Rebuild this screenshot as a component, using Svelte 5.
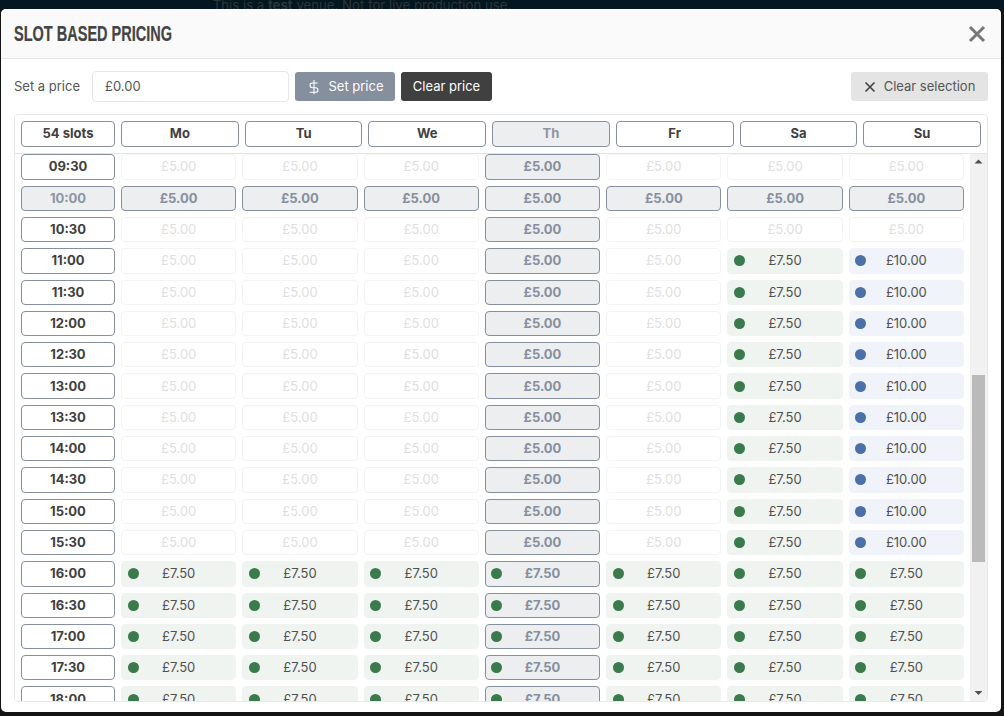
<script>
  import { onMount } from 'svelte';

  const days = ['Mo', 'Tu', 'We', 'Th', 'Fr', 'Sa', 'Su'];
  const selectedDay = 3;
  const selectedSlot = 20;
  const rowPitch = 31.3;
  const arrowSize = 17;

  // half hour slots over the whole day
  const slots = Array.from({ length: 48 }, (_, i) => {
    const h = String(Math.floor(i / 2)).padStart(2, '0');
    return `${h}:${i % 2 ? '30' : '00'}`;
  });

  function priceFor(slot, day) {
    if (slot >= 32) return { label: '£7.50', tone: 'green' };
    if (slot >= 22 && day === 5) return { label: '£7.50', tone: 'green' };
    if (slot >= 22 && day === 6) return { label: '£10.00', tone: 'blue' };
    return { label: '£5.00', tone: 'none' };
  }

  let body;
  let thumbTop = 0;
  let thumbHeight = 0;

  function syncThumb() {
    const track = body.clientHeight - arrowSize * 2;
    thumbHeight = (track * body.clientHeight) / body.scrollHeight;
    thumbTop = arrowSize + (track * body.scrollTop) / body.scrollHeight;
  }

  onMount(() => {
    body.scrollTop = 19 * rowPitch - 0.4;
    syncThumb();
  });
</script>

<div class="page">
  <div class="banner"><span>This is a <b>test</b> venue. Not for live production use.</span></div>

  <div class="modal">
    <header class="modal-header">
      <h2>SLOT BASED PRICING</h2>
      <button class="close" aria-label="Close">
        <svg viewBox="0 0 18 18" width="18" height="18">
          <path d="M2 2 L16 16 M16 2 L2 16" stroke="#777" stroke-width="3" fill="none" />
        </svg>
      </button>
    </header>

    <div class="toolbar">
      <label for="price">Set a price</label>
      <input id="price" type="text" value="£0.00" />
      <button class="btn btn-set">
        <svg viewBox="0 0 24 24" width="16" height="16" fill="none" stroke="#fff" stroke-width="1.6" stroke-linecap="round">
          <path d="M12 2v20M17 6H9.5a3.5 3.5 0 0 0 0 7h5a3.5 3.5 0 0 1 0 7H6" />
        </svg>
        Set price
      </button>
      <button class="btn btn-clear">Clear price</button>
      <button class="btn btn-selection">
        <svg viewBox="0 0 12 12" width="12" height="12">
          <path d="M1.5 1.5 L10.5 10.5 M10.5 1.5 L1.5 10.5" stroke="#444" stroke-width="1.7" fill="none" />
        </svg>
        Clear selection
      </button>
    </div>

    <div class="table">
      <div class="head">
        <div class="label">54 slots</div>
        {#each days as day, d}
          <div class="label day" class:active={d === selectedDay}>{day}</div>
        {/each}
      </div>

      <div class="body-wrap">
        <div class="body" bind:this={body} on:scroll={syncThumb}>
          <div class="rows">
            {#each slots as slot, s}
              <div class="label time" class:active={s === selectedSlot}>{slot}</div>
              {#each days as _, d}
                {@const price = priceFor(s, d)}
                <div
                  class="cell {price.tone}"
                  class:selected={s === selectedSlot || d === selectedDay}
                >
                  {#if price.tone !== 'none'}<span class="dot"></span>{/if}
                  {price.label}
                </div>
              {/each}
            {/each}
          </div>
        </div>

        <div class="scrollbar">
          <svg class="arrow" viewBox="0 0 17 17" width="17" height="17">
            <path d="M4.5 9.5 L8.5 5.5 L12.5 9.5 Z" fill="#505050" />
          </svg>
          <div class="thumb" style="top: {thumbTop}px; height: {thumbHeight}px"></div>
          <svg class="arrow" viewBox="0 0 17 17" width="17" height="17">
            <path d="M4.5 7 L8.5 11 L12.5 7 Z" fill="#505050" />
          </svg>
        </div>
      </div>
    </div>
  </div>
</div>

<style>
  :global(body) {
    margin: 0;
    background: #141414;
    font-family: Inter, "Liberation Sans", sans-serif;
    overflow: hidden;
  }

  .page {
    height: 716px;
    padding: 0 3px 0 1px;
    box-sizing: border-box;
  }

  .banner {
    height: 9px;
    margin: 0 -3px 0 -1px;
    background: #04161f;
    overflow: hidden;
    text-align: center;
    font-size: 13.2px;
    line-height: 10px;
    color: #2c363b;
    padding-right: 280px;
  }

  .modal {
    height: 703px;
    background: #fff;
    border-radius: 5px;
    overflow: hidden;
    display: flex;
    flex-direction: column;
  }

  .modal-header {
    height: 50px;
    flex: none;
    box-sizing: border-box;
    display: flex;
    align-items: center;
    justify-content: space-between;
    padding: 0 15px 0 13px;
    background: #fafafa;
    border-bottom: 1px solid #e5e5e5;
  }

  h2 {
    margin: 0;
    font-family: "Liberation Sans", sans-serif;
    font-size: 22px;
    font-weight: 700;
    color: #444;
    white-space: nowrap;
    -webkit-text-stroke: 0.2px #444;
    transform: scaleX(0.66);
    transform-origin: left center;
  }

  .close {
    display: flex;
    padding: 0;
    background: none;
    border: 0;
  }

  .toolbar {
    height: 55px;
    flex: none;
    box-sizing: border-box;
    display: flex;
    align-items: center;
    gap: 6px;
    padding: 0 13px;
    font-size: 13px;
    color: #555;
  }

  .toolbar label {
    width: 72px;
    padding-bottom: 2px;
  }

  input {
    width: 197px;
    height: 31px;
    box-sizing: border-box;
    padding: 0 12px 2px;
    border: 1px solid #e6e6e6;
    border-radius: 4px;
    font: inherit;
    font-size: 13px;
    color: #555;
    outline: none;
  }

  .btn {
    height: 29px;
    box-sizing: border-box;
    display: flex;
    align-items: center;
    justify-content: center;
    gap: 6px;
    padding: 0 0 2px;
    border: 0;
    border-radius: 3px;
    font: inherit;
    font-size: 13px;
  }

  .btn svg {
    margin-top: 2px;
  }

  .btn-set {
    width: 100px;
    background: #868f9d;
    color: #fff;
  }

  .btn-clear {
    width: 91px;
    background: #404040;
    color: #fff;
  }

  .btn-selection {
    width: 137px;
    margin-left: auto;
    background: #e4e4e4;
    color: #555;
    gap: 8px;
  }

  .table {
    flex: 1;
    min-height: 0;
    margin: 0 13px 10px;
    border: 1px solid #e8e8e8;
    border-radius: 4px;
    display: flex;
    flex-direction: column;
    overflow: hidden;
  }

  .head {
    flex: none;
    display: grid;
    grid-template-columns: 94px repeat(7, 1fr);
    gap: 6px;
    padding: 6px;
    border-bottom: 1px solid #e5e5e5;
  }

  .head .label {
    padding-bottom: 2px;
  }

  .body-wrap {
    flex: 1;
    min-height: 0;
    display: flex;
  }

  .body {
    flex: 1;
    min-width: 0;
    overflow-y: scroll;
    scrollbar-width: none;
  }

  .scrollbar {
    position: relative;
    flex: none;
    width: 17px;
    display: flex;
    flex-direction: column;
    justify-content: space-between;
    background: #f1f1f1;
  }

  .arrow {
    display: block;
  }

  .thumb {
    position: absolute;
    left: 2px;
    right: 2px;
    background: #bababa;
  }

  .rows {
    display: grid;
    grid-template-columns: 94px repeat(7, 1fr);
    grid-auto-rows: 25.3px;
    gap: 6px;
    margin-top: -0.3px;
    padding: 0 6px;
  }

  .label {
    height: 26px;
    box-sizing: border-box;
    display: flex;
    align-items: center;
    justify-content: center;
    border: 1px solid #868f9d;
    border-radius: 4px;
    background: #fff;
    font-size: 13px;
    font-weight: 700;
    color: #404040;
  }

  .time {
    height: 100%;
    padding-bottom: 1px;
  }

  .label.active {
    background: #eceef0;
    color: #8c95a3;
  }

  .cell {
    position: relative;
    display: flex;
    align-items: center;
    justify-content: center;
    box-sizing: border-box;
    padding-bottom: 1px;
    border: 1px solid #f4f4f4;
    border-radius: 4px;
    font-size: 13px;
    color: #e0e0e0;
  }

  .cell.green {
    background: #f0f4f1;
    border-color: #f0f4f1;
    color: #505050;
  }

  .cell.blue {
    background: #f0f4fa;
    border-color: #f0f4fa;
    color: #505050;
  }

  .cell.selected {
    background: #eceef0;
    border-color: #868f9d;
    color: #868f9d;
    font-weight: 700;
  }

  .dot {
    position: absolute;
    left: 5.5px;
    top: 50%;
    width: 11px;
    height: 11px;
    margin-top: -5.5px;
    border-radius: 50%;
  }

  .green .dot {
    background: #3a7a4c;
  }

  .blue .dot {
    background: #4a70a8;
  }
</style>
